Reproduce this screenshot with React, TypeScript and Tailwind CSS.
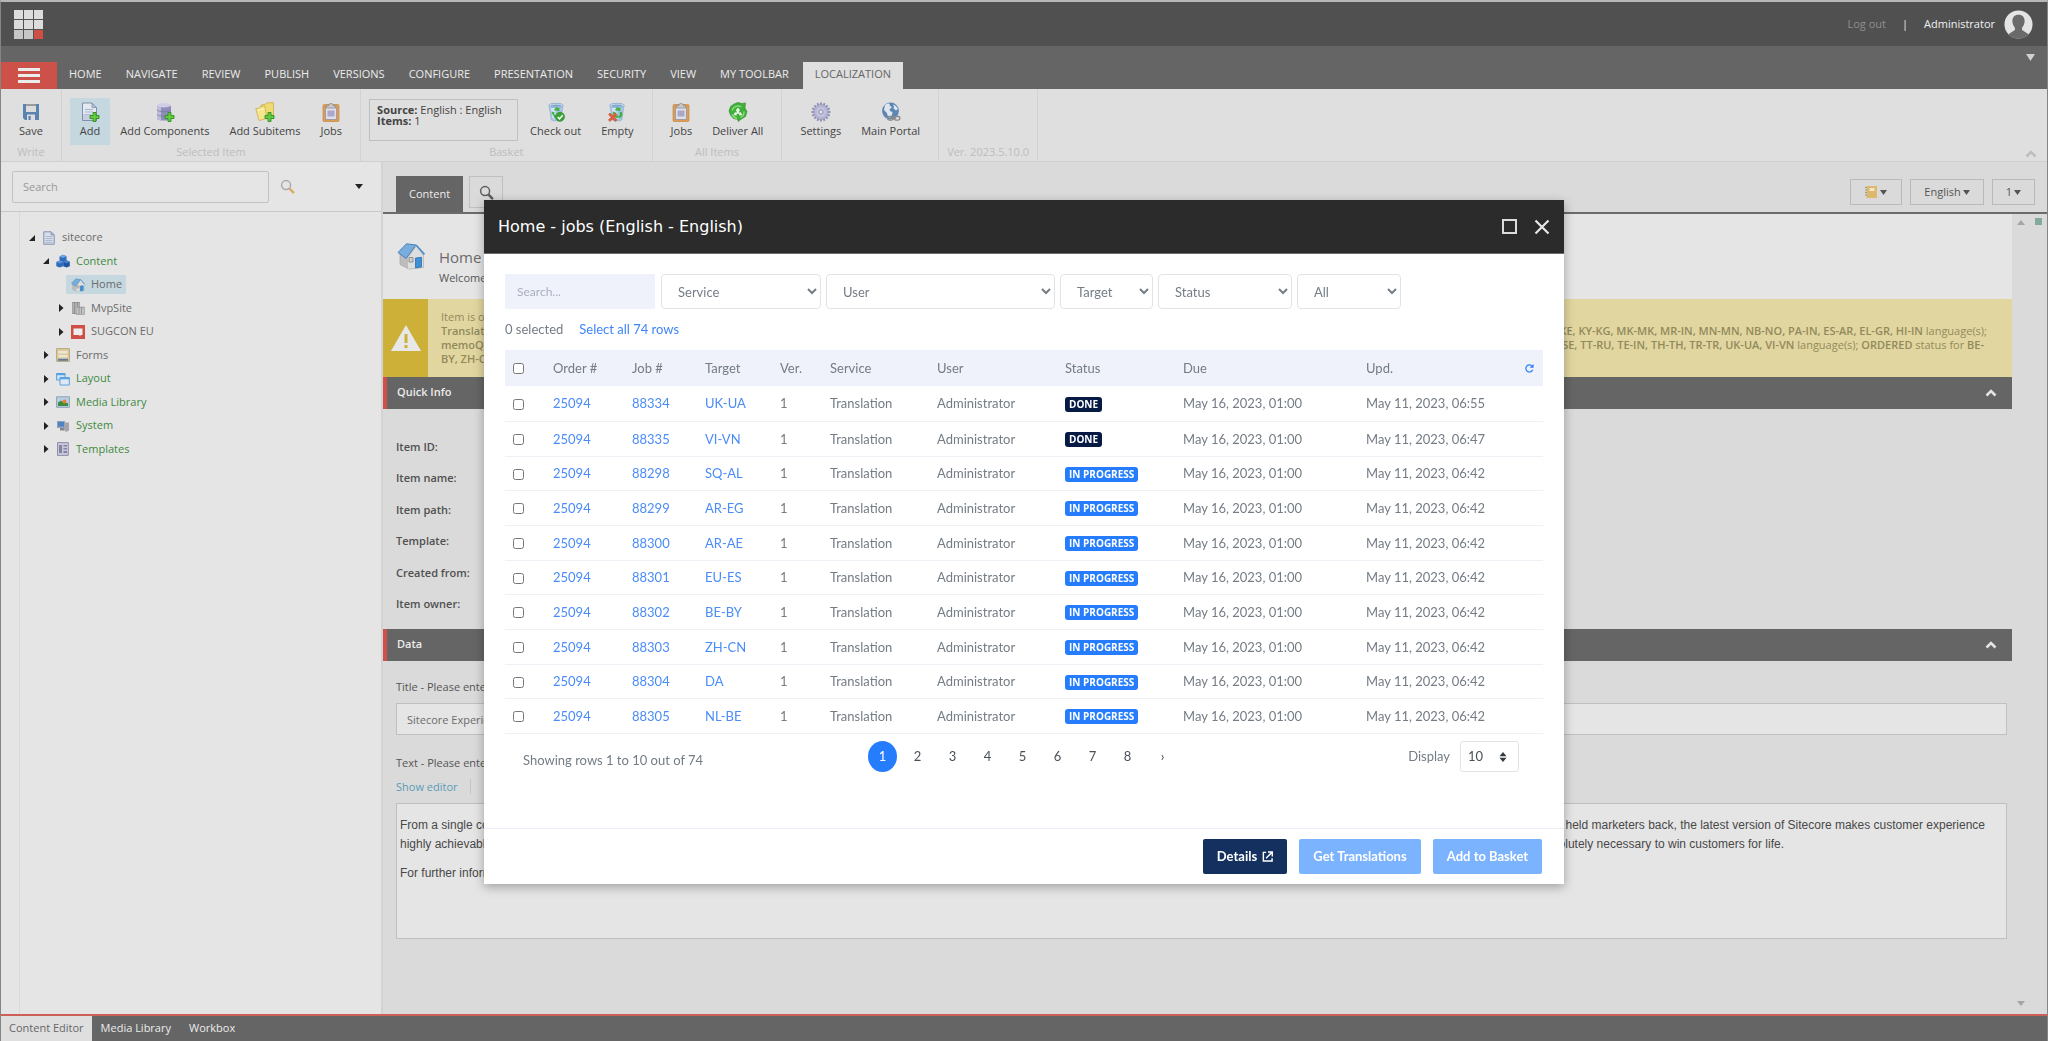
import type { ReactNode } from "react";

/* ---------- icons ---------- */

type IconProps = { className?: string };

const Svg = ({ className = "size-5", box = 20, children }: IconProps & { box?: number; children: ReactNode }) => (
  <svg viewBox={`0 0 ${box} ${box}`} className={`shrink-0 ${className}`} aria-hidden="true" fill="none">
    {children}
  </svg>
);

const Plus = () => (
  <path d="M13 10.500h3v3h3v3h-3v3h-3v-3h-3v-3h3z" fill="#63c93f" stroke="#2f8f25" strokeWidth="0.9" />
);

const Recycle = () => (
  <g fill="#3fb33c">
    <path d="M8 8l2.200-3 2.200 1.200 1-.8v3.600H9.900l1-.9-.7-.5-1 1.300z" />
    <path d="M6 9.500l3 1.300-1 .6 1 2.200h2v2.200H8.400L6.500 12l-1 .4z" />
    <path d="M12.500 10.500l2-1 1.200 3-1.600 3h-1v1.300L11 14.500l2.100-2v1.200z" />
  </g>
);

const Bin = () => (
  <>
    <path d="M3 3.500h14l-2.200 14.500c-2.500 1.300-7 1.300-9.500 0z" fill="#a9c6e6" stroke="#8aa9cc" strokeWidth="0.6" />
    <path d="M5 6l1.400 10 3 .8V6z" fill="#d5e4f3" />
    <ellipse cx="10" cy="3.300" rx="7.200" ry="2" fill="#d9e6f2" stroke="#7fa3cc" strokeWidth="0.8" />
    <ellipse cx="10" cy="3.700" rx="5.200" ry="1.100" fill="#7fa6d2" />
  </>
);

const SaveIcon = () => (
  <Svg>
    <path d="M2 2h16v16H4l-2-2z" fill="#5a83b0" />
    <path d="M5 2h10v8H5z" fill="#dcdcdc" />
    <path d="M5 2h10v2H5z" fill="#9a9a9a" />
    <path d="M6 12.500h8V18H6z" fill="#dcdcdc" />
    <path d="M7.500 14h2.200v4H7.500z" fill="#5a83b0" />
  </Svg>
);

const AddIcon = () => (
  <Svg>
    <path d="M2.500 1h9.500l4.500 4.500V18.500h-14z" fill="#e4e8f0" stroke="#7d90ad" />
    <path d="M12 1v4.500h4.500z" fill="#b9c6da" stroke="#7d90ad" strokeWidth="0.8" />
    <path d="M5 7.500h8M5 10h8M5 12.500h6" stroke="#a9b3cc" />
    <path d="M3 12h9v6H3z" fill="#b3bdd6" opacity="0.6" />
    <Plus />
  </Svg>
);

const Cylinder = () => (
  <Svg>
    <path d="M2 3.500v13c0 2.800 14 2.800 14 0v-13z" fill="#8f8eba" />
    <path d="M2 3.500v13c0 1 1.500 1.700 4 2V4z" fill="#bdbcda" />
    <ellipse cx="9" cy="3.300" rx="7" ry="2.200" fill="#cfcee6" />
    <path d="M2 8c1.500 2.200 12.500 2.200 14 0M2 12.500c1.500 2.200 12.500 2.200 14 0" stroke="#77769f" strokeWidth="0.7" />
    <Plus />
  </Svg>
);

const FolderAdd = () => (
  <Svg>
    <path d="M6 3l5-1 1-1.300h6.500V15H8z" fill="#efd972" stroke="#c8a63c" strokeWidth="0.7" />
    <path d="M.8 6.500l4-.5.800-1.500 4-.5L12 16.500 4 18.500z" fill="#f5e68e" stroke="#c8a63c" strokeWidth="0.7" />
    <path d="M3 8l6.500-1" stroke="#fff6c4" />
    <Plus />
  </Svg>
);

const Clipboard = () => (
  <Svg>
    <rect x="2" y="2.500" width="16" height="17" rx="1.200" fill="#de9d55" stroke="#c78640" strokeWidth="0.7" />
    <rect x="4.500" y="5" width="11" height="12.500" fill="#dedeea" stroke="#8d8c9c" strokeWidth="0.7" />
    <path d="M6.500 8.500h7v6h-7z" fill="#a9a8c8" />
    <path d="M5.500 6V3.600h2.300a2.200 2.200 0 014.400 0h2.300V6z" fill="#c9c9c9" stroke="#858585" strokeWidth="0.7" />
  </Svg>
);

const CheckoutIcon = () => (
  <Svg>
    <Bin />
    <Recycle />
    <circle cx="14" cy="14.800" r="4.600" fill="#37a336" stroke="#2a8329" strokeWidth="0.5" />
    <path d="M11.700 14.900l1.800 1.900 3.200-3.600" stroke="#fff" strokeWidth="1.500" />
  </Svg>
);

const EmptyIcon = () => (
  <Svg>
    <Bin />
    <Recycle />
    <path d="M1.500 12.500l1.500-1.500 2.700 2.500L8.300 11l1.600 1.600-2.500 2.700L10 18l-1.700 1.500-2.600-2.600L3 19.500 1.400 18 4 15.300z" fill="#e0603f" stroke="#bf4325" strokeWidth="0.5" />
  </Svg>
);

const DeliverIcon = () => (
  <Svg>
    <path d="M10 .5l4 1 3.500-.5-.5 5 2 3.500-1.500 5-4 2.500-3.500 2.500v-2l-4.500-1-3-3.500L1 9l1.500-4.500L6 2z" fill="#3fae3a" stroke="#2f8d2c" strokeWidth="0.6" />
    <path d="M4.200 8.500a6 6 0 019-3.600M16 9.500a6 6 0 01-3.600 6M9 16.300a6 6 0 01-4.800-4" stroke="#8fe07d" strokeWidth="1.300" />
    <path d="M10 5.600l2.200 3-1.200.4.300 2 1.200-1 2 3-3.300.4.200-1.100-1.400-.9-1.500.9.300 1.100-3.300-.3 1.600-3.100 1.200 1 .4-2-1.100-.4z" fill="#e9f6e4" />
  </Svg>
);

const GearIcon = () => (
  <Svg>
    <path
      d="M10 .5v19M.5 10h19M3.300 3.300l13.400 13.400M16.700 3.300L3.300 16.700M6.400 1.200l7.200 17.600M1.200 6.400l17.600 7.200M13.600 1.200L6.400 18.800M18.800 6.400L1.200 13.600"
      stroke="#908fb6"
      strokeWidth="1.900"
    />
    <circle cx="10" cy="10" r="7.400" fill="#b7b6d4" stroke="#908fb6" strokeWidth="0.600" />
    <circle cx="10" cy="10" r="4.600" fill="#c7c6df" />
    <circle cx="10" cy="10" r="2.200" fill="#dfdfdf" stroke="#8786aa" strokeWidth="0.900" />
  </Svg>
);

const GlobeIcon = () => (
  <Svg>
    <circle cx="9.500" cy="9" r="8.400" fill="#5c86b4" />
    <path d="M4 3c1.500-1.300 3-1.700 4.500-1.200L9 4l2 1-2.500 2.500.5 1.500 2.500 1-.5 3-2 3C6 14 6.500 11.500 5.500 10.500L3 8z" fill="#dfe6ee" />
    <path d="M12 2.500c2.500.8 4 2.300 5 4.500l-2 1.500-2.500-2 .5-2z" fill="#dfe6ee" />
    <rect x="6.500" y="14.500" width="6" height="3.600" rx="1.800" stroke="#8a8a8a" strokeWidth="1.300" />
    <rect x="13" y="14.500" width="6" height="3.600" rx="1.800" stroke="#8a8a8a" strokeWidth="1.300" />
    <path d="M10.500 16.300h4.500" stroke="#8a8a8a" strokeWidth="1.200" />
  </Svg>
);

const DocIcon = () => (
  <Svg className="size-[14px]" box={14}>
    <path d="M1.800.8H9l3.200 3.200v9.200H1.800z" fill="#d9deea" stroke="#7f8fae" />
    <path d="M9 .8V4h3.200z" fill="#aab7cf" stroke="#7f8fae" strokeWidth="0.600" />
    <path d="M3.500 5.500h7M3.500 7.500h7M3.500 9.500h7M3.500 11.300h7" stroke="#a2aecb" strokeWidth="0.800" />
  </Svg>
);

const CubesIcon = () => (
  <Svg className="size-[14px]" box={14}>
    <path d="M3.500 2.500L7 .8l3.500 1.500v4.200L7 8 3.500 6.500z" fill="#2f6bbd" />
    <path d="M3.500 2.500L7 .8l3.500 1.500L7 4z" fill="#6fa3e2" />
    <path d="M.3 8L3.800 6.500 7.200 8v4.200L3.800 13.600.3 12.200z" fill="#2f6bbd" />
    <path d="M.3 8L3.800 6.500 7.200 8 3.800 9.500z" fill="#5f95d8" />
    <path d="M7.200 7.800l3.300-1.500 3.300 1.500v4.400l-3.300 1.400-3.300-1.400z" fill="#2154a0" />
    <path d="M7.200 7.800l3.300-1.500 3.300 1.500-3.300 1.500z" fill="#4c83cc" />
  </Svg>
);

const HouseIcon = ({ className = "size-[14px]" }: IconProps) => (
  <Svg className={className} box={28}>
    <path d="M3 12v10.500l9 4.500 14.500-1.500V13L18 5z" fill="#bdbdbd" stroke="#a5a5a5" strokeWidth="0.700" />
    <path d="M11 16v10.800l15.300-1.500V13.500L19 5z" fill="#dedede" />
    <path d="M1 10.500L9.500 1.800 19 3 9 16.500z" fill="#78aede" stroke="#3f79b5" strokeWidth="0.900" />
    <path d="M19 3l8.500 9.500" stroke="#4a8cc9" strokeWidth="1.800" />
    <path d="M18.500 16l6-.7v9.700l-6 .8z" fill="#3d8fd6" stroke="#2a6db0" strokeWidth="0.800" />
    <path d="M12 15.500h4v4.500h-4z" fill="#c6ccd2" stroke="#8a8a8a" strokeWidth="0.900" />
  </Svg>
);

const BuildingsIcon = () => (
  <Svg className="size-[14px]" box={14}>
    <path d="M1 1h8v12H1z" fill="#9a9a9a" />
    <path d="M5 6h8.500v7.500H5z" fill="#b4b4b4" stroke="#8a8a8a" strokeWidth="0.500" />
    <path d="M1.500 3h7M1.500 5h7M1.500 7h4M1.500 9h4M1.500 11h4M6 8h7M6 10h7M6 12h7" stroke="#dcdcdc" strokeWidth="0.700" />
    <path d="M3.500 1v12M6.500 1v5M8 6v7M10.500 6v7" stroke="#7d7d7d" strokeWidth="0.600" />
  </Svg>
);

const SugconIcon = () => (
  <Svg className="size-[14px]" box={14}>
    <path d="M0 0h14v14H0z" fill="#cf4f46" />
    <path d="M2.500 3.500h9v6.500H9.500v1.500L8 10H2.500z" fill="#ededed" />
  </Svg>
);

const FormsIcon = () => (
  <Svg className="size-[14px]" box={14}>
    <path d="M.6.600h12.800v12.800H.600z" fill="#d9cba6" stroke="#b9a87a" />
    <path d="M2.500 3h9v2.500h-9zM2.500 7h9v2.300h-9z" fill="#efe6cd" />
    <path d="M2 10.800h10v2H2z" fill="#62779c" />
  </Svg>
);

const LayoutIcon = () => (
  <Svg className="size-[14px]" box={14}>
    <path d="M.600 1.500h8.500v6.500H.600z" fill="#cfe4f7" stroke="#58a2df" />
    <path d="M.600 1.200h8.500v2H.600z" fill="#58a2df" />
    <path d="M4 5.500h9.300v7.500H4z" fill="#dfe9f5" stroke="#58a2df" />
    <path d="M4 5h9.300v2.300H4z" fill="#58a2df" />
  </Svg>
);

const MediaIcon = () => (
  <Svg className="size-[14px]" box={14}>
    <path d="M.6 1.800h12.800v10.500H.600z" fill="#b5cfe6" stroke="#90a0b5" />
    <path d="M2 10V7.500l3-2 3 2.500h4v3H2z" fill="#3f8b3a" />
    <circle cx="8.500" cy="6.500" r="2" fill="#e2803a" />
  </Svg>
);

const SystemIcon = () => (
  <Svg className="size-[14px]" box={14}>
    <path d="M1 2h8v7H1z" fill="#8fa3bd" />
    <path d="M2 3h6v4.500H2z" fill="#4c83c4" />
    <path d="M8 3.500h5v8l-3 1.500-2-2z" fill="#a4a4ae" />
    <path d="M4 9h4v2.500H4z" fill="#85858f" />
  </Svg>
);

const TemplatesIcon = () => (
  <Svg className="size-[14px]" box={14}>
    <path d="M1.500.6h10.800v12.800H1.500z" fill="#c9c8da" stroke="#8f8ea8" />
    <path d="M3 3h3v8H3zM7.500 3h3.500v1.500H7.500zM7.500 6H11v1.500H7.500zM7.500 9H11v2H7.500z" fill="#8483a2" />
  </Svg>
);

const Lens = ({ className = "size-4", handle = "#d9ae62", ring = "#a9a9a9" }: IconProps & { handle?: string; ring?: string }) => (
  <Svg className={className} box={16}>
    <circle cx="6.500" cy="6.500" r="4.800" stroke={ring} strokeWidth="1.600" />
    <path d="M10.200 10.200l4.600 4.800" stroke={handle} strokeWidth="2.600" />
  </Svg>
);

const Caret = ({ className = "w-2 text-[#555]" }: IconProps) => (
  <svg viewBox="0 0 8 5" className={`h-[5px] shrink-0 ${className}`} aria-hidden="true" preserveAspectRatio="none">
    <path d="M0 0h8L4 5z" fill="currentColor" />
  </svg>
);

const ChevronUp = ({ className = "text-[#e4e4e4]" }: IconProps) => (
  <svg viewBox="0 0 12 9" className={`h-[9px] w-3 shrink-0 ${className}`} aria-hidden="true" fill="none">
    <path d="M1.500 7.500L6 3l4.500 4.500" stroke="currentColor" strokeWidth="2.600" />
  </svg>
);

const Logo = () => (
  <svg viewBox="0 0 29 29" className="size-[29px]" role="img" aria-label="Sitecore">
    {[0, 10, 20].flatMap((y) =>
      [0, 10, 20].map((x) => (
        <rect key={`${x}-${y}`} x={x} y={y} width="9" height="9" fill={x === 20 && y === 20 ? "#cf4f46" : y === 20 ? "#c6c6c6" : "#dcdcdc"} />
      )),
    )}
  </svg>
);

/* ---------- page header and ribbon ---------- */

const TABS = ["HOME", "NAVIGATE", "REVIEW", "PUBLISH", "VERSIONS", "CONFIGURE", "PRESENTATION", "SECURITY", "VIEW", "MY TOOLBAR"];

const Group = ({ label, children }: { label?: string; children?: ReactNode }) => (
  <div className="flex flex-col justify-between border-r border-[#d2d2d2] px-2">
    <div className="flex h-14 items-end">{children}</div>
    <div className="h-4 text-center leading-[14px] text-[#bdbdbd]">{label}</div>
  </div>
);

const RibbonButton = ({ icon, label, active }: { icon: ReactNode; label: string; active?: boolean }) => (
  <button type="button" className={`flex h-[47px] flex-col items-center px-[10px] pt-1 leading-[18px] text-[#444] ${active ? "bg-[#c5d8e0]" : ""}`}>
    {icon}
    {label}
  </button>
);

const TopBar = () => (
  <header className="flex h-11 items-center justify-between bg-[#505050] pr-[14px] pl-[13px]">
    <Logo />
    <div className="flex items-center text-[#f0f0f0]">
      <a href="#logout" className="text-[#8f8f8f]">Log out</a>
      <span className="px-4">|</span>
      <span>Administrator</span>
      <svg viewBox="0 0 30 30" className="ml-[9px] size-[29px]" aria-hidden="true">
        <circle cx="15" cy="15" r="14.500" fill="#e4e4e4" />
        <path d="M15 5c4.500 0 6.500 3 6.300 7-.2 3-1.500 5-2.600 6.300v2.500l6.800 4.200a14.500 14.500 0 01-21 0l6.800-4.200v-2.500C10.200 17 8.900 15 8.700 12 8.500 8 10.500 5 15 5z" fill="#6a6a6a" />
      </svg>
    </div>
  </header>
);

const TabStrip = () => (
  <nav className="flex h-[43px] items-end justify-between bg-[#656565]">
    <div className="flex h-[27px] text-[#ececec]">
      <button type="button" aria-label="Menu" className="flex w-14 flex-col items-center justify-center gap-[3px] bg-[#cd5148]">
        <span className="h-[3px] w-[22px] bg-[#ececec]" />
        <span className="h-[3px] w-[22px] bg-[#ececec]" />
        <span className="h-[3px] w-[22px] bg-[#ececec]" />
      </button>
      {TABS.map((t) => (
        <button type="button" key={t} className="px-3 pb-[2px]">{t}</button>
      ))}
      <button type="button" className="ml-[2px] bg-[#dfdfdf] px-3 pb-[2px] text-[#666]">LOCALIZATION</button>
    </div>
    <button type="button" aria-label="Toggle ribbon" className="self-start px-3 py-2">
      <svg viewBox="0 0 9 7" className="h-[7px] w-[9px]" aria-hidden="true">
        <path d="M0 0h9L4.500 7z" fill="#d0d0d0" />
      </svg>
    </button>
  </nav>
);

const Ribbon = () => (
  <section className="flex h-[73px] border-b border-[#d0d0d0] bg-[#dfdfdf]">
    <Group label="Write">
      <RibbonButton icon={<SaveIcon />} label="Save" />
    </Group>
    <Group label="Selected Item">
      <RibbonButton icon={<AddIcon />} label="Add" active />
      <RibbonButton icon={<Cylinder />} label="Add Components" />
      <RibbonButton icon={<FolderAdd />} label="Add Subitems" />
      <RibbonButton icon={<Clipboard />} label="Jobs" />
    </Group>
    <Group label="Basket">
      <div className="mr-[2px] mb-1 h-[42px] w-[149px] border border-[#bfbfbf] px-[7px] py-1 leading-[11px] text-[#444]">
        <b>Source:</b> English : English
        <br />
        <b>Items:</b> 1
      </div>
      <RibbonButton icon={<CheckoutIcon />} label="Check out" />
      <RibbonButton icon={<EmptyIcon />} label="Empty" />
    </Group>
    <Group label="All Items">
      <RibbonButton icon={<Clipboard />} label="Jobs" />
      <RibbonButton icon={<DeliverIcon />} label="Deliver All" />
    </Group>
    <Group>
      <RibbonButton icon={<GearIcon />} label="Settings" />
      <RibbonButton icon={<GlobeIcon />} label="Main Portal" />
    </Group>
    <Group label="Ver. 2023.5.10.0" />
    <div className="flex flex-1 items-end justify-end pr-[10px] pb-[3px]">
      <ChevronUp className="text-[#bdbdbd]" />
    </div>
  </section>
);

/* ---------- content tree ---------- */

type Node = { label: string; level: 0 | 1 | 2; icon: ReactNode; state: "open" | "closed" | "leaf"; green?: boolean; selected?: boolean };

const NODES: Node[] = [
  { label: "sitecore", level: 0, icon: <DocIcon />, state: "open" },
  { label: "Content", level: 1, icon: <CubesIcon />, state: "open", green: true },
  { label: "Home", level: 2, icon: <HouseIcon />, state: "leaf", selected: true },
  { label: "MvpSite", level: 2, icon: <BuildingsIcon />, state: "closed" },
  { label: "SUGCON EU", level: 2, icon: <SugconIcon />, state: "closed" },
  { label: "Forms", level: 1, icon: <FormsIcon />, state: "closed" },
  { label: "Layout", level: 1, icon: <LayoutIcon />, state: "closed", green: true },
  { label: "Media Library", level: 1, icon: <MediaIcon />, state: "closed", green: true },
  { label: "System", level: 1, icon: <SystemIcon />, state: "closed", green: true },
  { label: "Templates", level: 1, icon: <TemplatesIcon />, state: "closed", green: true },
];

const INDENT = ["pl-[6px]", "pl-5", "pl-[35px]"];

const TreeRow = ({ node }: { node: Node }) => (
  <li className={`flex h-[23px] items-center even:h-6 ${INDENT[node.level]}`}>
    <span className="flex w-[11px] justify-center">
      {node.state !== "leaf" && (
        <svg viewBox="0 0 8 8" className="size-2" aria-hidden="true">
          <path d={node.state === "open" ? "M7 1v6H1z" : "M2 0l4.500 4L2 8z"} fill="#222" />
        </svg>
      )}
    </span>
    <a href="#item" className={`flex h-[19px] items-center gap-[6px] pr-1 pl-[5px] ${node.green ? "text-[#3f8a3f]" : "text-[#6b6b6b]"} ${node.selected ? "bg-[#c5d8e0]" : ""}`}>
      {node.icon}
      {node.label}
    </a>
  </li>
);

const TreePanel = () => (
  <aside className="flex w-[382px] shrink-0 flex-col border-r-2 border-[#d3d3d3] bg-[#e5e5e5]">
    <form className="flex h-[50px] items-center border-b border-[#c8c8c8] pr-[18px] pl-[11px]">
      <input aria-label="Search" placeholder="Search" className="h-8 w-[257px] rounded-[2px] border border-[#c2c2c2] px-[10px] placeholder:text-[#999]" />
      <button type="button" aria-label="Run search" className="ml-[11px]">
        <Lens className="size-[15px]" />
      </button>
      <button type="button" aria-label="Search options" className="ml-auto">
        <Caret className="w-2 text-[#222]" />
      </button>
    </form>
    <div className="flex flex-1 pl-[18px]">
      <ul className="flex-1 border-l border-[#d9d9d9] pt-[14px]">
        {NODES.map((n) => (
          <TreeRow key={n.label} node={n} />
        ))}
      </ul>
    </div>
  </aside>
);

/* ---------- item editor ---------- */

const SectionHeader = ({ title }: { title: string }) => (
  <button type="button" className="flex h-8 w-full items-center justify-between border-l-4 border-[#cd5148] bg-[#656565] pr-[15px] pb-[2px] pl-[10px] font-semibold text-[#ececec]">
    {title}
    <ChevronUp />
  </button>
);

const FIELDS = ["Item ID:", "Item name:", "Item path:", "Template:", "Created from:", "Item owner:"];

const ItemWarning = () => (
  <div className="flex h-[78px] bg-[#e2d6a0]">
    <div className="flex w-[45px] items-center justify-center bg-[#cdb037]">
      <svg viewBox="0 0 30 26" className="h-[26px] w-[30px]" aria-hidden="true">
        <path d="M15 0l15 26H0z" fill="#e8e8e8" />
        <path d="M13.500 9h3v9h-3zM13.500 20h3v3h-3z" fill="#cdb037" />
      </svg>
    </div>
    <div className="flex-1 self-center pr-[25px] pl-[13px] leading-[14px] text-[#918a5c]">
      <p>Item is out for translation.</p>
      <p className="flex justify-between">
        <b className="font-semibold">Translations: IN PROGRESS status for</b>
        <span>
          <b className="font-semibold">SW-KE, KY-KG, MK-MK, MR-IN, MN-MN, NB-NO, PA-IN, ES-AR, EL-GR, HI-IN</b> language(s);
        </span>
      </p>
      <p className="flex justify-between pr-[3px]">
        <b className="font-semibold">memoQ: IN PROGRESS status for</b>
        <span>
          <b className="font-semibold">SV-SE, TT-RU, TE-IN, TH-TH, TR-TR, UK-UA, VI-VN</b> language(s); <b className="font-semibold">ORDERED</b> status for <b className="font-semibold">BE-</b>
        </span>
      </p>
      <p>
        <b className="font-semibold">BY, ZH-CN</b> language(s).
      </p>
    </div>
  </div>
);

const Editor = () => (
  <main className="flex min-w-0 flex-1 flex-col bg-[#dadada]">
    <div className="flex h-[52px] shrink-0 items-end justify-between border-b-2 border-[#6b6b6b] pr-3 pl-[13px]">
      <div className="flex items-start gap-[6px]">
        <button type="button" className="h-9 bg-[#656565] px-[13px] text-[#ececec]">Content</button>
        <button type="button" aria-label="Search tab" className="flex h-8 w-[34px] items-center justify-center border border-[#bfbfbf]">
          <Lens className="size-[15px]" ring="#5c5c5c" handle="#5c5c5c" />
        </button>
      </div>
      <div className="mb-[7px] flex gap-2 text-[#555]">
        <button type="button" aria-label="Notes" className="flex h-[26px] w-[52px] items-center justify-center gap-[3px] border border-[#b9b9b9]">
          <svg viewBox="0 0 12 12" className="size-3" aria-hidden="true">
            <path d="M1.500 0H12v12H1.500z" fill="#dcb96c" />
            <path d="M4.500 2h5v3h-5z" fill="#f1e6c8" />
            <path d="M0 1.500h2M0 4h2M0 6.500h2M0 9h2" stroke="#999" />
          </svg>
          <Caret className="w-[7px] text-[#555]" />
        </button>
        <button type="button" className="flex h-[26px] w-[74px] items-center justify-center gap-[2px] border border-[#b9b9b9]">
          English <Caret className="w-[7px] text-[#555]" />
        </button>
        <button type="button" className="flex h-[26px] w-[43px] items-center justify-center gap-[2px] border border-[#b9b9b9]">
          1 <Caret className="w-[7px] text-[#555]" />
        </button>
      </div>
    </div>
    <div className="flex flex-1">
      <div className="min-w-0 flex-1">
        <div className="flex h-[85px] gap-[14px] bg-[#e5e5e5] pt-7 pl-[14px]">
          <HouseIcon className="size-7" />
          <div className="text-[#555]">
            <h1 className="text-[15px] leading-[30px] text-[#6b6b6b]">Home</h1>
            <p className="leading-[11px]">Welcome to Sitecore</p>
          </div>
        </div>
        <ItemWarning />
        <SectionHeader title="Quick Info" />
        <dl className="flex h-[220px] flex-col justify-between pt-[30px] pb-[17px] pl-[13px] leading-4 font-semibold text-[#505050]">
          {FIELDS.map((f) => (
            <dt key={f}>{f}</dt>
          ))}
        </dl>
        <SectionHeader title="Data" />
        <div className="flex flex-col pr-[5px] pl-[13px] text-[#555]">
          <label htmlFor="title" className="mt-[18px] leading-4">Title - Please enter a title for the page:</label>
          <input id="title" defaultValue="Sitecore Experience Platform" className="mt-2 h-8 border border-[#c0c0c0] bg-[#e5e5e5] px-[10px] text-[#6b6b6b]" />
          <span className="mt-5 leading-4">Text - Please enter the text for the page:</span>
          <div className="mt-2 mb-[9px] flex h-[15px] items-center gap-[12px]">
            <a href="#editor" className="leading-[14px] text-[#5b9ab8]">Show editor</a>
            <span className="h-[15px] w-px bg-[#c4c4c4]" />
          </div>
          <div className="h-[136px] border border-[#c0c0c0] bg-[#e5e5e5] px-[3px] pt-3 font-[Liberation_Sans,Arial,sans-serif] text-[12px] leading-[19px] text-[#484848]">
            <p className="flex justify-between pr-[18px]">
              <span>From a single connected platform that integrates with other customer-facing platforms, to eliminating the complexity that has</span>
              <span>previously held marketers back, the latest version of Sitecore makes customer experience</span>
            </p>
            <p className="flex justify-between pr-[219px]">
              <span>highly achievable. Learn how to deliver marketing software that truly gets customers, and</span>
              <span>makes it absolutely necessary to win customers for life.</span>
            </p>
            <p className="mt-[10px]">For further information, please go to the Sitecore Documentation site</p>
          </div>
        </div>
      </div>
      <div className="flex w-[17px] flex-col items-center justify-between pt-1.5 pb-2">
        <Caret className="w-2 rotate-180 text-[#a5a5a5]" />
        <Caret className="w-2 text-[#a5a5a5]" />
      </div>
      <div className="flex w-[18px] justify-center pt-1">
        <span className="size-[7px] bg-[#83aa9c]" />
      </div>
    </div>
  </main>
);

/* ---------- jobs dialog ---------- */

const FILTERS: { label: string; width: string }[] = [
  { label: "Service", width: "w-[160px]" },
  { label: "User", width: "w-[229px]" },
  { label: "Target", width: "w-[93px]" },
  { label: "Status", width: "w-[134px]" },
  { label: "All", width: "w-[104px]" },
];

const COLUMNS: { label: string; width: string }[] = [
  { label: "Order #", width: "w-[79px]" },
  { label: "Job #", width: "w-[73px]" },
  { label: "Target", width: "w-[75px]" },
  { label: "Ver.", width: "w-[50px]" },
  { label: "Service", width: "w-[107px]" },
  { label: "User", width: "w-[128px]" },
  { label: "Status", width: "w-[118px]" },
  { label: "Due", width: "w-[183px]" },
];

const JOBS = [
  { job: "88334", target: "UK-UA", done: true, updated: "06:55" },
  { job: "88335", target: "VI-VN", done: true, updated: "06:47" },
  { job: "88298", target: "SQ-AL", done: false, updated: "06:42" },
  { job: "88299", target: "AR-EG", done: false, updated: "06:42" },
  { job: "88300", target: "AR-AE", done: false, updated: "06:42" },
  { job: "88301", target: "EU-ES", done: false, updated: "06:42" },
  { job: "88302", target: "BE-BY", done: false, updated: "06:42" },
  { job: "88303", target: "ZH-CN", done: false, updated: "06:42" },
  { job: "88304", target: "DA", done: false, updated: "06:42" },
  { job: "88305", target: "NL-BE", done: false, updated: "06:42" },
];

const JobsTable = () => (
  <table className="mt-3 w-full table-fixed text-left">
    <thead>
      <tr className="h-9 bg-[#eff2fa]">
        <th className="w-12 pl-2">
          <input type="checkbox" aria-label="Select all" className="mt-px block size-[11px]" />
        </th>
        {COLUMNS.map((c) => (
          <th key={c.label} className={`font-normal ${c.width}`}>{c.label}</th>
        ))}
        <th className="font-normal">
          <div className="flex items-center justify-between pr-[9px]">
            Upd.
            <button type="button" aria-label="Refresh">
              <svg viewBox="0 0 10 10" className="size-[9px]" fill="none" aria-hidden="true">
                <path d="M8.600 6.500A4 4 0 118 2.300" stroke="#287dff" strokeWidth="1.300" />
                <path d="M9.500 0v4.200H5.300z" fill="#287dff" />
              </svg>
            </button>
          </div>
        </th>
      </tr>
    </thead>
    <tbody>
      {JOBS.map((j) => (
        <tr key={j.job} className="h-[35px] border-b border-[#eff1f6] nth-[3n]:h-[34px]">
          <td className="pl-2">
            <input type="checkbox" aria-label={`Select job ${j.job}`} className="mt-[2px] block size-[11px]" />
          </td>
          <td><a href="#order" className="text-[#4a8cf8]">25094</a></td>
          <td><a href="#job" className="text-[#4a8cf8]">{j.job}</a></td>
          <td><a href="#target" className="text-[#4a8cf8]">{j.target}</a></td>
          <td>1</td>
          <td>Translation</td>
          <td>Administrator</td>
          <td>
            <span className={`mt-[2px] block w-fit rounded-[3px] px-1 font-[Open_Sans,sans-serif] text-[10px] leading-[15px] font-bold text-white ${j.done ? "bg-[#061a44]" : "bg-[#257dfd]"}`}>
              {j.done ? "DONE" : "IN PROGRESS"}
            </span>
          </td>
          <td>May 16, 2023, 01:00</td>
          <td>May 11, 2023, {j.updated}</td>
        </tr>
      ))}
    </tbody>
  </table>
);

const Pager = () => (
  <div className="mt-[7px] grid grid-cols-[363px_1fr_auto] items-center pr-6">
    <p className="pt-2 pl-[18px]">Showing rows 1 to 10 out of 74</p>
    <div className="flex gap-[6px] text-[#495057]">
      {["1", "2", "3", "4", "5", "6", "7", "8", "›"].map((p, i) => (
        <button type="button" key={p} className={`h-[31px] w-[29px] rounded-[50%] ${i === 0 ? "bg-[#257dfd] text-white" : ""}`}>
          {p}
        </button>
      ))}
    </div>
    <div className="flex items-center gap-[10px]">
      <label htmlFor="page-size">Display</label>
      <div className="relative">
        <select id="page-size" className="h-[31px] w-[59px] appearance-none rounded-[3px] border border-[#e1e3e7] pl-[7px] text-[#495057]">
          <option>10</option>
        </select>
        <svg viewBox="0 0 8 10" className="pointer-events-none absolute top-[11px] right-3 h-[10px] w-2" aria-hidden="true">
          <path d="M4 0l3.500 4.200h-7zM4 10L.500 5.800h7z" fill="#343a40" />
        </svg>
      </div>
    </div>
  </div>
);

const JobsDialog = () => (
  <div className="fixed inset-0 flex items-start justify-center pt-[200px]">
    <div role="dialog" aria-label="Home - jobs" className="w-[1080px] bg-white font-[Lato,sans-serif] text-[13px] leading-[18px] text-[#747c85] shadow-[0_3px_10px_rgba(0,0,0,0.3)]">
      <div className="flex h-[54px] items-center justify-between border-b border-[#6b6b6b] bg-[#2b2b2b] pr-[14px] pl-[14px] text-white">
        <h2 className="font-[DejaVu_Sans,Verdana,sans-serif] text-[16px]">Home - jobs (English - English)</h2>
        <div className="flex items-center gap-[17px]">
          <button type="button" aria-label="Maximize" className="size-[15px] border-2 border-[#dcdcdc]" />
          <button type="button" aria-label="Close">
            <svg viewBox="0 0 16 16" className="size-4" aria-hidden="true">
              <path d="M1.500 1.500l13 13M14.500 1.500l-13 13" stroke="#e8e8e8" strokeWidth="2.200" />
            </svg>
          </button>
        </div>
      </div>
      <div className="px-[21px] pt-5">
        <div className="flex gap-[5px]">
          <input aria-label="Search jobs" placeholder="Search..." className="mr-px h-[35px] w-[150px] bg-[#eff2fa] px-3 text-[12px] placeholder:text-[#a9afbd]" />
          {FILTERS.map((f) => (
            <select key={f.label} aria-label={f.label} className={`h-[35px] rounded-[4px] border border-[#e1e3e7] bg-white px-3 ${f.width}`}>
              <option>{f.label}</option>
            </select>
          ))}
        </div>
        <div className="mt-[11px] flex gap-4">
          <span>0 selected</span>
          <button type="button" className="text-[#3f85f8]">Select all 74 rows</button>
        </div>
        <JobsTable />
        <Pager />
      </div>
      <div className="mt-14 flex h-14 items-center justify-end gap-3 border-t border-[#eaeef7] px-[22px] font-bold text-white">
        <button type="button" className="flex h-[35px] w-[84px] items-center justify-center gap-[5px] rounded-[2px] bg-[#13305f]">
          Details
          <svg viewBox="0 0 12 12" className="size-[11px]" fill="none" aria-hidden="true">
            <path d="M4.500 1.500h-3v9.500h9.500v-3M6.500 1.200h4.700v4.700M10.800 1.500L4.500 7.800" stroke="#fff" strokeWidth="1.600" />
          </svg>
        </button>
        <button type="button" className="h-[35px] w-[122px] rounded-[2px] bg-[#7cb3ff]">Get Translations</button>
        <button type="button" className="h-[35px] w-[109px] rounded-[2px] bg-[#7cb3ff]">Add to Basket</button>
      </div>
    </div>
  </div>
);

export default function App() {
  return (
    <div className="flex min-h-screen flex-col border-x border-t-2 border-x-[#858585] border-t-[#b5b8b5] font-[Open_Sans,sans-serif] text-[11px]">
      <TopBar />
      <TabStrip />
      <Ribbon />
      <div className="flex flex-1">
        <TreePanel />
        <Editor />
      </div>
      <footer className="flex h-[27px] border-t-2 border-[#cd5f57] bg-[#656565] text-[#ececec]">
        <button type="button" className="bg-[#dfdfdf] px-2 text-[#666]">Content Editor</button>
        <button type="button" className="px-[9px]">Media Library</button>
        <button type="button" className="px-[9px]">Workbox</button>
      </footer>
      <JobsDialog />
    </div>
  );
}
